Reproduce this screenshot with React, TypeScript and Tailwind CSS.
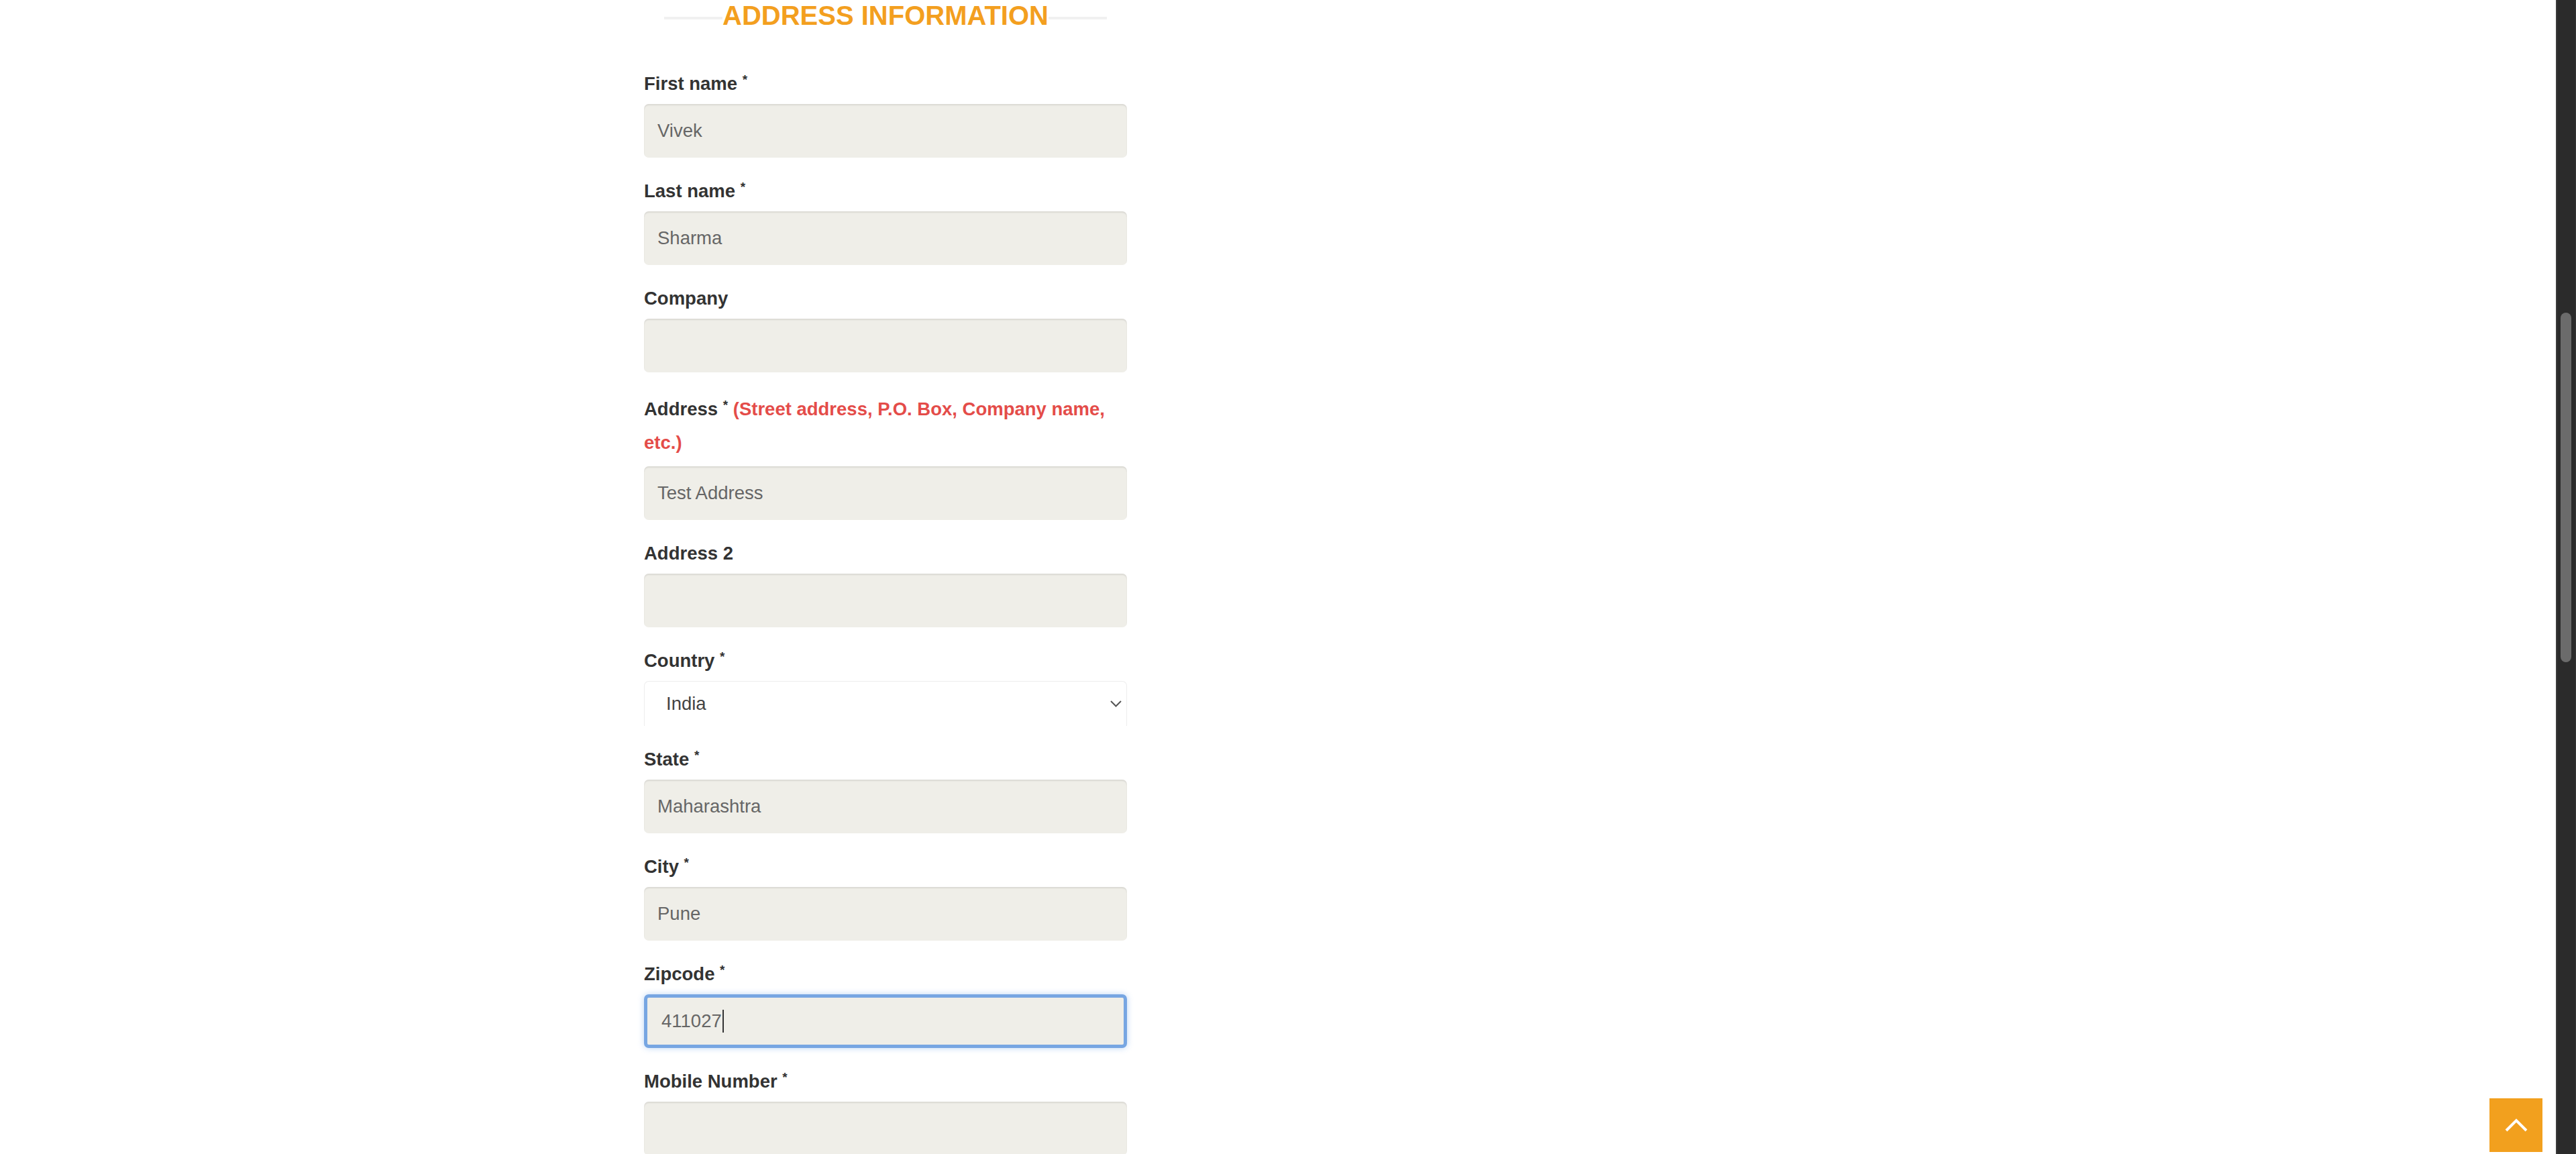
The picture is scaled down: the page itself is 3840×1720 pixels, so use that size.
import React from "react";

const Req = () => (
  <span className="align-[9px] text-[19px] leading-none font-bold text-[#333]">*</span>
);

function Label({ children, required }: { children: React.ReactNode; required?: boolean }) {
  return (
    <label className="block text-[27.5px] font-bold leading-[40px] text-[#333] mb-[10px]">
      {children}
      {required ? <> <Req /></> : null}
    </label>
  );
}

function TextBox({ value }: { value?: string }) {
  return (
    <div className="h-[80px] w-full rounded-[7px] bg-[#efeee8] shadow-[inset_0_2px_2px_rgba(0,0,0,0.09)] flex items-center pl-[20px] text-[27.5px] text-[#666]">
      {value ?? ""}
    </div>
  );
}

function Field({ label, required, value }: { label: string; required?: boolean; value?: string }) {
  return (
    <div className="mb-[30px]">
      <Label required={required}>{label}</Label>
      <TextBox value={value} />
    </div>
  );
}

export default function App() {
  return (
    <div className="flex h-[1720px] w-[3840px] overflow-hidden bg-white [font-family:'Liberation_Sans',Arial,Helvetica,sans-serif]">
      <div className="relative flex-1 bg-white">
        <div className="ml-[960px] w-[720px]">
          {/* Heading */}
          <div className="mt-[1px] mb-[60px] mx-[30px] flex h-[44px] items-center">
            <div className="mt-[8px] h-[4px] flex-1 bg-[#f1f1f1]" />
            <h2 className="text-[40px] font-bold leading-[44px] text-[#f39f1f] whitespace-nowrap">
              ADDRESS INFORMATION
            </h2>
            <div className="mt-[8px] h-[4px] flex-1 bg-[#f1f1f1]" />
          </div>

          <Field label="First name" required value="Vivek" />
          <Field label="Last name" required value="Sharma" />
          <Field label="Company" />

          <div className="mb-[30px]">
            <label className="block text-[27.5px] font-bold leading-[50px] text-[#333] mb-[10px]">
              Address <Req />{" "}
              <span className="text-[#e44c49]">(Street address, P.O. Box, Company name, etc.)</span>
            </label>
            <TextBox value="Test Address" />
          </div>

          <Field label="Address 2" />

          <div className="mb-[30px]">
            <Label required>Country</Label>
            <div className="flex h-[67px] w-full items-center justify-between rounded-t-[7px] border-x border-t border-[#ededed] bg-white pl-[32px] pr-[7px] text-[27.5px] text-[#444]">
              <span>India</span>
              <svg width="17" height="10" viewBox="0 0 17 10" fill="none">
                <polyline points="1,1 8.5,8.5 16,1" stroke="#555" strokeWidth="2" />
              </svg>
            </div>
          </div>

          <Field label="State" required value="Maharashtra" />
          <Field label="City" required value="Pune" />

          <div className="mb-[30px]">
            <Label required>Zipcode</Label>
            <div className="flex h-[80px] w-full items-center rounded-[7px] border-[5px] border-[#77a6e2] bg-[#efeee8] pl-[21px] text-[27.5px] text-[#666] shadow-[0_0_10px_rgba(102,160,233,0.45)]">
              <span>411027</span>
              <span className="ml-[1px] h-[34px] w-[2px] bg-[#333]" />
            </div>
          </div>

          <Field label="Mobile Number" required />
        </div>

        {/* scroll to top button */}
        <button className="absolute bottom-[3px] right-[20px] flex h-[80px] w-[79px] items-center justify-center bg-[#f2a01e]">
          <svg width="34" height="20" viewBox="0 0 34 20" fill="none">
            <polyline points="2,18 17,3 32,18" stroke="#fff" strokeWidth="4" />
          </svg>
        </button>
      </div>

      {/* scrollbar */}
      <div className="flex h-full w-[30px] flex-col border-l-2 border-r border-l-[#3b3b3b] border-r-[#363636] bg-[#2b2b2b] pt-[466px]">
        <div className="ml-[5px] h-[521px] w-[16px] rounded-full bg-[#6b6b6b]" />
      </div>
    </div>
  );
}
